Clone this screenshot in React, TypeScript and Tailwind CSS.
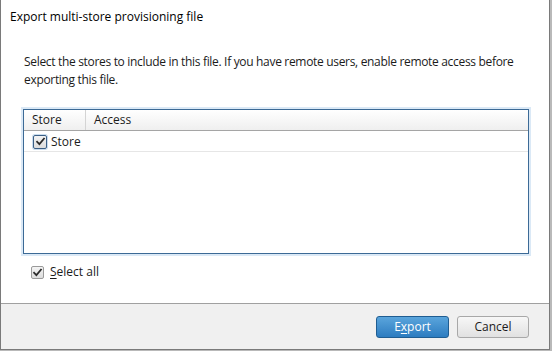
import React from "react";

const CheckMark: React.FC<{ className?: string }> = ({ className }) => (
  <svg viewBox="0 0 13 13" className={className}>
    <path
      d="M2.5 6.8 L5.2 9.6 L10.6 3.2"
      fill="none"
      stroke="#2a2a2a"
      strokeWidth="2.1"
      strokeLinecap="square"
    />
  </svg>
);

const CheckBox: React.FC<{ focused?: boolean }> = ({ focused }) => (
  <span
    className={
      "flex items-center justify-center rounded-[2px] border bg-gradient-to-b from-[#f4f4f4] to-[#dcdcdc] " +
      (focused
        ? "h-[14px] w-[14px] border-[#3b5f85] shadow-[0_0_0_1px_#c9dcee]"
        : "h-[13px] w-[13px] border-[#9a9a9a]")
    }
  >
    <CheckMark className="h-[11px] w-[11px]" />
  </span>
);

export default function App() {
  return (
    <div
      className="relative h-[351px] w-[552px] overflow-hidden bg-[#b9b9b9] text-[12px] text-[#1b1b1b]"
      style={{ fontFamily: '"Open Sans", "Noto Sans", sans-serif' }}
    >
      <div className="flex h-[350px] w-[550px] flex-col border-b border-l border-r border-[#7a7a7a] bg-white">
        <div className="flex h-[31px] items-center pl-[9px] pt-[2px] text-[12px] text-black">
          Export multi-store provisioning file
        </div>

        <div className="flex flex-1 flex-col px-[22px]">
          <p className="mt-[22px] leading-[18px] tracking-[-0.32px] pl-[1px]">
            Select the stores to include in this file. If you have remote users, enable remote access before
            exporting this file.
          </p>

          <div className="mt-[20px] h-[145px] w-[506px] border border-[#3c6a96] shadow-[0_0_0_2px_#dbe9f6] bg-white">
            <div className="flex h-[21px] border-b border-[#a5a5a5] bg-gradient-to-b from-white to-[#efefef]">
              <div className="flex w-[62px] items-center border-r border-[#d4d4d4] pl-[8px]">Store</div>
              <div className="flex items-center pl-[8px]">Access</div>
            </div>
            <div className="flex h-[21px] items-center gap-[4px] border-b border-[#e6e6e6] pl-[9px] pt-[1px]">
              <CheckBox focused />
              <span>Store</span>
            </div>
          </div>

          <div className="mt-[9px] flex items-center gap-[6px] pl-[8px]">
            <CheckBox />
            <span>
              <span className="underline underline-offset-2">S</span>elect all
            </span>
          </div>
        </div>

        <div className="flex h-[46px] items-center justify-end gap-[8px] border-t border-[#a0a0a0] bg-[#f0f0f0] pr-[20px]">
          <button className="flex h-[22px] w-[73px] items-center justify-center rounded-[3px] border border-[#1f5d92] bg-gradient-to-b from-[#5aa5dc] to-[#2c7cc0] text-white">
            E<span className="underline underline-offset-2">x</span>port
          </button>
          <button className="flex h-[22px] w-[72px] items-center justify-center rounded-[3px] border border-[#a8a8a8] bg-gradient-to-b from-[#f7f7f7] to-[#e1e1e1] text-[#1b1b1b]">
            Cancel
          </button>
        </div>
      </div>
    </div>
  );
}
